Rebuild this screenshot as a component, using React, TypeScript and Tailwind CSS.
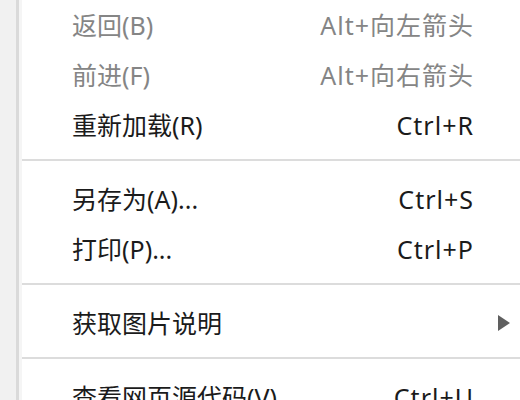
import React from "react";

type Item =
  | { kind: "item"; label: string; shortcut?: string; disabled?: boolean; submenu?: boolean }
  | { kind: "sep" };

const items: Item[] = [
  { kind: "item", label: "返回(B)", shortcut: "Alt+向左箭头", disabled: true },
  { kind: "item", label: "前进(F)", shortcut: "Alt+向右箭头", disabled: true },
  { kind: "item", label: "重新加载(R)", shortcut: "Ctrl+R" },
  { kind: "sep" },
  { kind: "item", label: "另存为(A)...", shortcut: "Ctrl+S" },
  { kind: "item", label: "打印(P)...", shortcut: "Ctrl+P" },
  { kind: "sep" },
  { kind: "item", label: "获取图片说明", submenu: true },
  { kind: "sep" },
  { kind: "item", label: "查看网页源代码(V)", shortcut: "Ctrl+U" },
];

export default function App() {
  return (
    <div
      className="flex w-[520px] h-[400px] overflow-hidden bg-white"
      style={{ fontFamily: '"Noto Sans", "Noto Sans CJK SC", sans-serif' }}
    >
      <div className="w-[16px] shrink-0 bg-[#f1f1f1]" />
      <div className="w-[3px] shrink-0 bg-[#dadada]" />
      <div className="w-[3px] shrink-0 bg-[#f5f5f5]" />
      <div className="flex-1 flex flex-col bg-white">
        {items.map((it, i) =>
          it.kind === "sep" ? (
            <div key={i} className="h-[24px] shrink-0 pt-[9px]">
              <div className="h-[2px] bg-[#dcdcdc]" />
            </div>
          ) : (
            <div
              key={i}
              className={`h-[50px] shrink-0 flex items-center pl-[50px] text-[25px] leading-none ${
                it.disabled ? "text-[#858585]" : "text-[#1b1b1b]"
              }`}
            >
              <span className="flex-1 whitespace-nowrap">{it.label}</span>
              <span className="whitespace-nowrap tracking-[1px] -mr-[1px]">{it.shortcut ?? ""}</span>
              <span className="w-[47px] shrink-0 flex items-center pl-[25px]">
                {it.submenu ? (
                  <svg width="12" height="16" viewBox="0 0 12 16">
                    <path d="M0 0 L12 8 L0 16 Z" fill="#5f5f5f" />
                  </svg>
                ) : null}
              </span>
            </div>
          )
        )}
      </div>
    </div>
  );
}
